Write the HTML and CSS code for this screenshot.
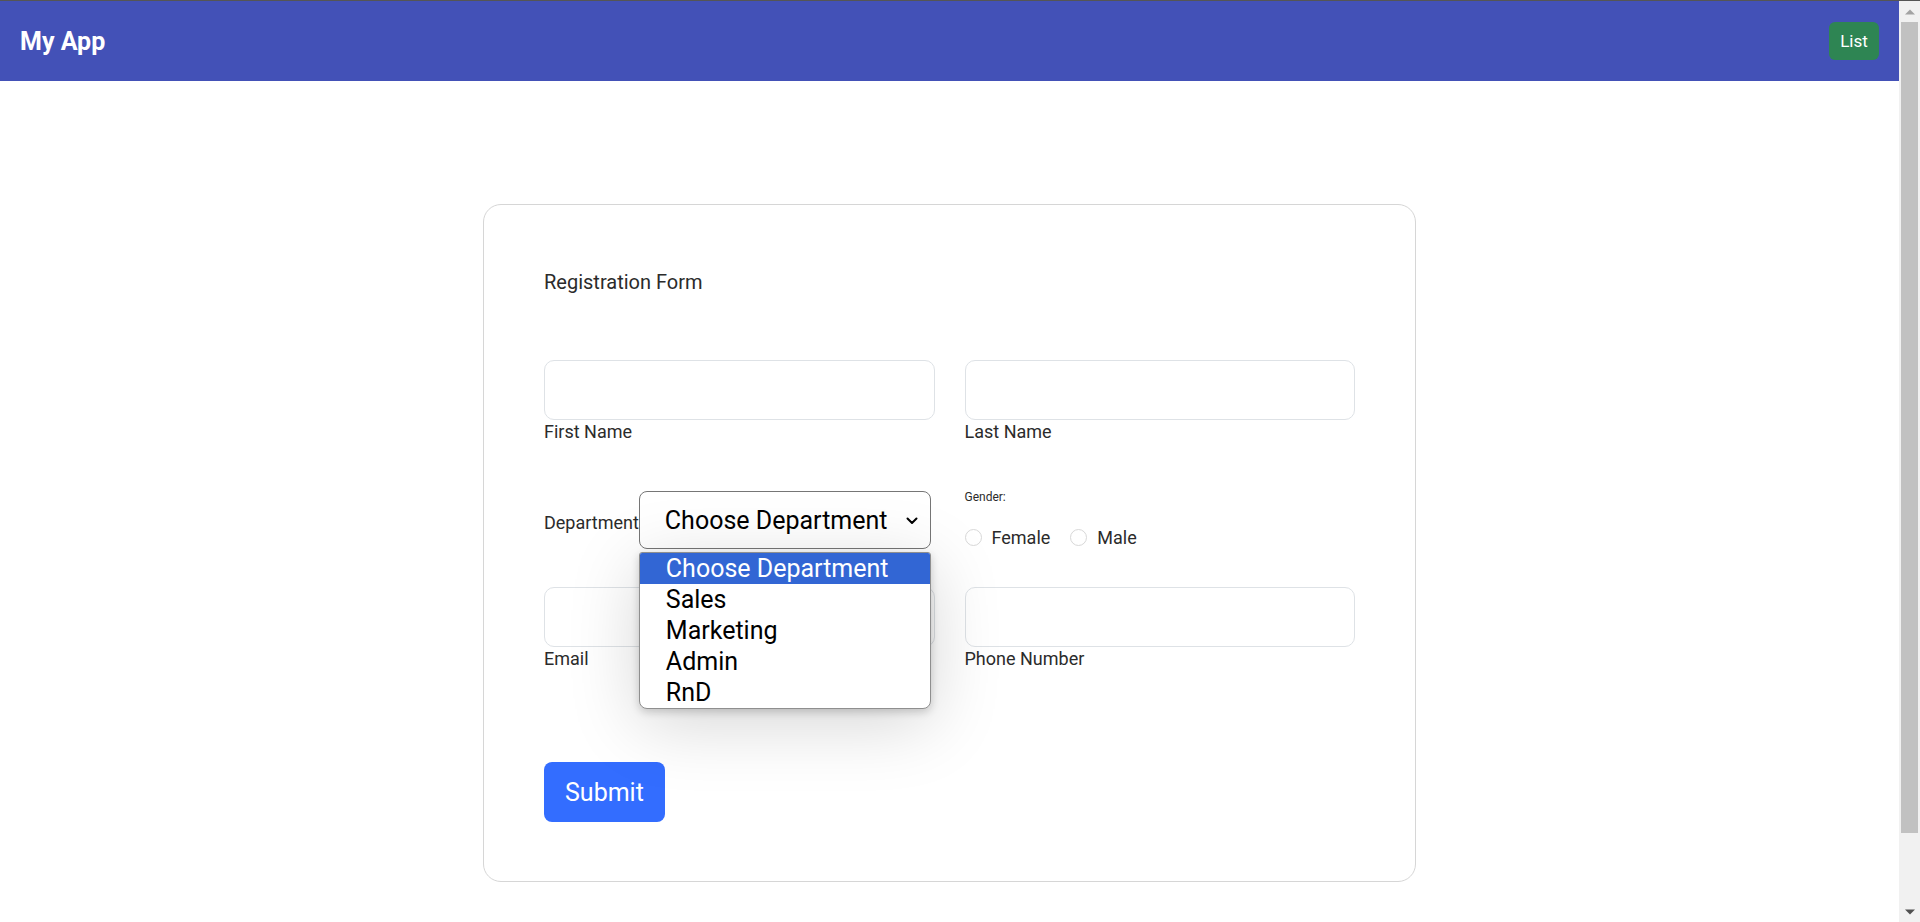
FILE: index.html
```html
<!DOCTYPE html>
<html lang="en">
<head>
<meta charset="utf-8">
<title>My App</title>
<link rel="stylesheet" href="styles.css">
</head>
<body>
<header class="topbar">
  <div class="brand">My App</div>
  <button class="list-btn" type="button">List</button>
</header>
<main class="page">
  <form class="card">
    <div class="title">Registration Form</div>
    <div class="row row-names">
      <div class="field">
        <input class="text-input" type="text">
        <label class="field-label">First Name</label>
      </div>
      <div class="field">
        <input class="text-input" type="text">
        <label class="field-label">Last Name</label>
      </div>
    </div>
    <div class="row row-choice">
      <div class="dept">
        <span class="dept-label">Department</span>
        <div class="select-wrap">
          <div class="select">
            <span class="select-value">Choose Department</span>
            <svg class="chevron" width="12" height="8" viewBox="0 0 12 8"><path d="M1.5 1.5 L6 6 L10.5 1.5" fill="none" stroke="#000" stroke-width="2" stroke-linecap="round" stroke-linejoin="round"/></svg>
          </div>
          <ul class="options">
            <li class="option active">Choose Department</li>
            <li class="option">Sales</li>
            <li class="option">Marketing</li>
            <li class="option">Admin</li>
            <li class="option">RnD</li>
          </ul>
        </div>
      </div>
      <div class="gender">
        <div class="gender-label">Gender:</div>
        <div class="radios">
          <span class="radio"></span><span class="radio-text">Female</span>
          <span class="radio radio-second"></span><span class="radio-text">Male</span>
        </div>
      </div>
    </div>
    <div class="row row-contact">
      <div class="field">
        <input class="text-input" type="text">
        <label class="field-label">Email</label>
      </div>
      <div class="field">
        <input class="text-input" type="text">
        <label class="field-label">Phone Number</label>
      </div>
    </div>
    <div class="actions">
      <button class="submit" type="button">Submit</button>
    </div>
  </form>
</main>
<div class="scrollbar" aria-hidden="true">
  <div class="sb-btn">
    <svg width="10" height="6" viewBox="0 0 10 6"><path d="M0 5.5 L5 0.5 L10 5.5 Z" fill="#a3a3a3"/></svg>
  </div>
  <div class="sb-track"><div class="sb-thumb"></div></div>
  <div class="sb-btn">
    <svg width="10" height="6" viewBox="0 0 10 6"><path d="M0 0.5 L5 5.5 L10 0.5 Z" fill="#505050"/></svg>
  </div>
</div>
</body>
</html>
```
FILE: styles.css
```css
* { box-sizing: border-box; }
html, body { margin: 0; padding: 0; }
html { border-top: 1px solid #555; }
body {
  font-family: Roboto, "Liberation Sans", Arial, sans-serif;
  color: #212529;
  background: #fff;
  margin-right: 21px;
}
.topbar {
  height: 80px;
  background: #4351b7;
  display: flex;
  align-items: center;
  justify-content: space-between;
  padding: 0 20px 0 20px;
}
.brand {
  color: #fff;
  font-size: 25px;
  font-weight: 700;
}
.list-btn {
  font-family: inherit;
  font-size: 17px;
  color: #fff;
  background: #2e8553;
  border: none;
  border-radius: 6px;
  width: 50px;
  height: 38px;
  padding: 0;
}
.page {
  padding: 123px 0 128px;
}
.card {
  width: 933px;
  margin: 0 auto;
  border: 1px solid #d6d6d6;
  border-radius: 18px;
  padding: 65px 60px 59px;
}
.title {
  font-size: 20px;
  line-height: 24px;
  color: #2b2b2b;
}
.row {
  display: grid;
  grid-template-columns: 1fr 1fr;
  column-gap: 30px;
}
.row-names { margin-top: 66px; }
.row-choice { margin-top: 47px; }
.row-contact { margin-top: 38px; }
.field { display: flex; flex-direction: column; }
.text-input {
  height: 60px;
  width: 100%;
  border: 1px solid #dee2e6;
  border-radius: 10px;
  font-family: inherit;
  font-size: 18px;
  padding: 0 12px;
}
.field-label {
  font-size: 18px;
  line-height: 24px;
  color: #2b2b2b;
}
.dept {
  display: flex;
  align-items: baseline;
  align-self: start;
}
.dept-label {
  font-size: 18px;
  color: #2b2b2b;
}
.select-wrap { position: relative; }
.select {
  width: 292px;
  height: 58px;
  border: 1px solid #767676;
  border-radius: 8px;
  display: flex;
  align-items: center;
  justify-content: space-between;
  padding: 1px 12px 0 25px;
  font-size: 25px;
  color: #000;
  background: #fff;
}
.chevron { display: block; }
.options {
  position: absolute;
  top: calc(100% + 3px);
  left: 0;
  width: 292px;
  margin: 0;
  padding: 0;
  list-style: none;
  background: #fff;
  border: 1px solid #8f8f8f;
  border-radius: 3px 3px 8px 8px;
  overflow: hidden;
  box-shadow: 0 14px 70px rgba(0, 0, 0, 0.17), 0 3px 8px rgba(0, 0, 0, 0.18);
  z-index: 5;
}
.option {
  height: 31px;
  line-height: 31px;
  padding-left: 26px;
  font-size: 25px;
  color: #000;
  white-space: nowrap;
}
.option.active {
  background: #3266d4;
  color: #fff;
}
.gender { display: flex; flex-direction: column; }
.gender-label {
  font-size: 12px;
  line-height: 12px;
  color: #2b2b2b;
}
.radios {
  margin-top: 22px;
  display: flex;
  align-items: center;
  height: 24px;
}
.radio {
  width: 17px;
  height: 17px;
  border: 1px solid #d8d8d8;
  border-radius: 50%;
  margin-right: 10px;
  flex: none;
}
.radio-second { margin-left: 20px; }
.radio-text {
  font-size: 18px;
  color: #2b2b2b;
}
.actions { margin-top: 91px; }
.submit {
  font-family: inherit;
  font-size: 25px;
  color: #fff;
  background: #336dff;
  border: none;
  border-radius: 8px;
  height: 60px;
  padding: 0 21px;
}
.scrollbar {
  position: fixed;
  top: 1px;
  right: 0;
  bottom: 0;
  width: 21px;
  background: #f1f1f1;
  display: flex;
  flex-direction: column;
  z-index: 10;
}
.sb-btn {
  height: 21px;
  flex: none;
  display: flex;
  align-items: center;
  justify-content: center;
}
.sb-track {
  flex: 1;
  padding: 0 2px;
}
.sb-thumb {
  height: 811px;
  background: #c1c1c1;
}
```
